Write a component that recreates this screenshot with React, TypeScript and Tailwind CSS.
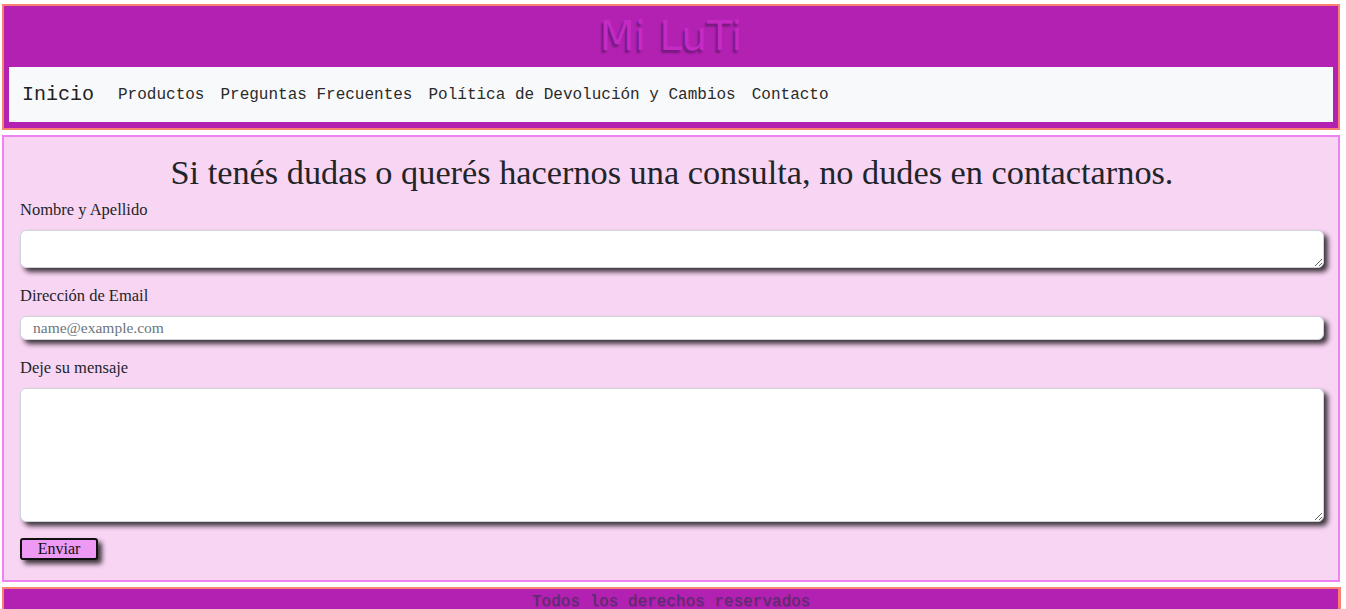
import React from "react";

export default function App() {
  const mono = { fontFamily: '"Liberation Mono", "Courier New", monospace' };
  const serif = { fontFamily: '"Liberation Serif", "Times New Roman", serif' };
  return (
    <div className="min-h-screen bg-white pt-[4px] pb-[4px]">
      <header className="ml-[2px] w-[1338px] border-2 border-[#fa8072] bg-[#b321b3] px-[5px] pb-[6px]">
        <h1
          className="flex h-[61px] items-center justify-center text-[41px] leading-none text-[#c42ac4] [text-shadow:-2px_3px_2px_rgba(70,20,80,0.55)]"
          style={{ fontFamily: '"DejaVu Sans", Verdana, sans-serif' }}
        >
          Mi LuTi
        </h1>
        <nav className="flex h-[55px] items-center bg-[#f8f9fa] pl-[13px] text-[#2a2a2a]" style={mono}>
          <a className="mr-[16px] text-[20px] text-[#222]">Inicio</a>
          <ul className="flex items-center text-[16px]">
            <li className="px-[8px]">Productos</li>
            <li className="px-[8px]">Preguntas Frecuentes</li>
            <li className="px-[8px]">Política de Devolución y Cambios</li>
            <li className="px-[8px]">Contacto</li>
          </ul>
        </nav>
      </header>

      <main
        className="mt-[5px] ml-[2px] w-[1338px] border-2 border-[#ee82ee] bg-[#f9d5f4] pt-[16px] pb-[19px] pl-[16px] pr-[14px] text-[#212529]"
        style={serif}
      >
        <h2 className="mb-[7px] text-center text-[34.3px] leading-[38px]">
          Si tenés dudas o querés hacernos una consulta, no dudes en contactarnos.
        </h2>
        <form className="flex flex-col">
          <label className="mb-[8px] text-[16.5px] leading-[24px]">Nombre y Apellido</label>
          <textarea
            className="mb-[16px] h-[38px] w-full resize-y rounded-[6px] border border-[#ced4da] bg-white px-[12px] text-[15px] shadow-[4px_4px_5px_rgba(0,0,0,0.75)] outline-none"
            style={serif}
          />
          <label className="mb-[8px] text-[16.5px] leading-[24px]">Dirección de Email</label>
          <input
            type="email"
            placeholder="name@example.com"
            className="mb-[16px] h-[24px] w-full rounded-[6px] border border-[#ced4da] bg-white px-[12px] text-[15.5px] text-[#212529] shadow-[4px_4px_5px_rgba(0,0,0,0.75)] outline-none placeholder:text-[#6c757d]"
            style={serif}
          />
          <label className="mb-[8px] text-[16.5px] leading-[24px]">Deje su mensaje</label>
          <textarea
            className="mb-[15px] h-[134px] w-full resize-y rounded-[6px] border border-[#ced4da] bg-white px-[12px] text-[15px] shadow-[4px_4px_5px_rgba(0,0,0,0.75)] outline-none"
            style={serif}
          />
          <div>
            <button
              type="button"
              className="h-[22px] w-[78px] rounded-[3px] border-2 border-[#111] bg-[#ee9af4] text-[16px] leading-none text-[#111] shadow-[4px_4px_5px_rgba(0,0,0,0.75)]"
              style={serif}
            >
              Enviar
            </button>
          </div>
        </form>
      </main>

      <footer
        className="mt-[5px] ml-[2px] w-[1339px] border-2 border-r-[3px] border-[#fa8072] bg-[#b321b3] pt-[1px] pb-[4px] text-center text-[16px] leading-[24px] text-[#55306a] [text-shadow:1px_1px_1px_rgba(60,10,70,0.25)]"
        style={mono}
      >
        Todos los derechos reservados
      </footer>
    </div>
  );
}
